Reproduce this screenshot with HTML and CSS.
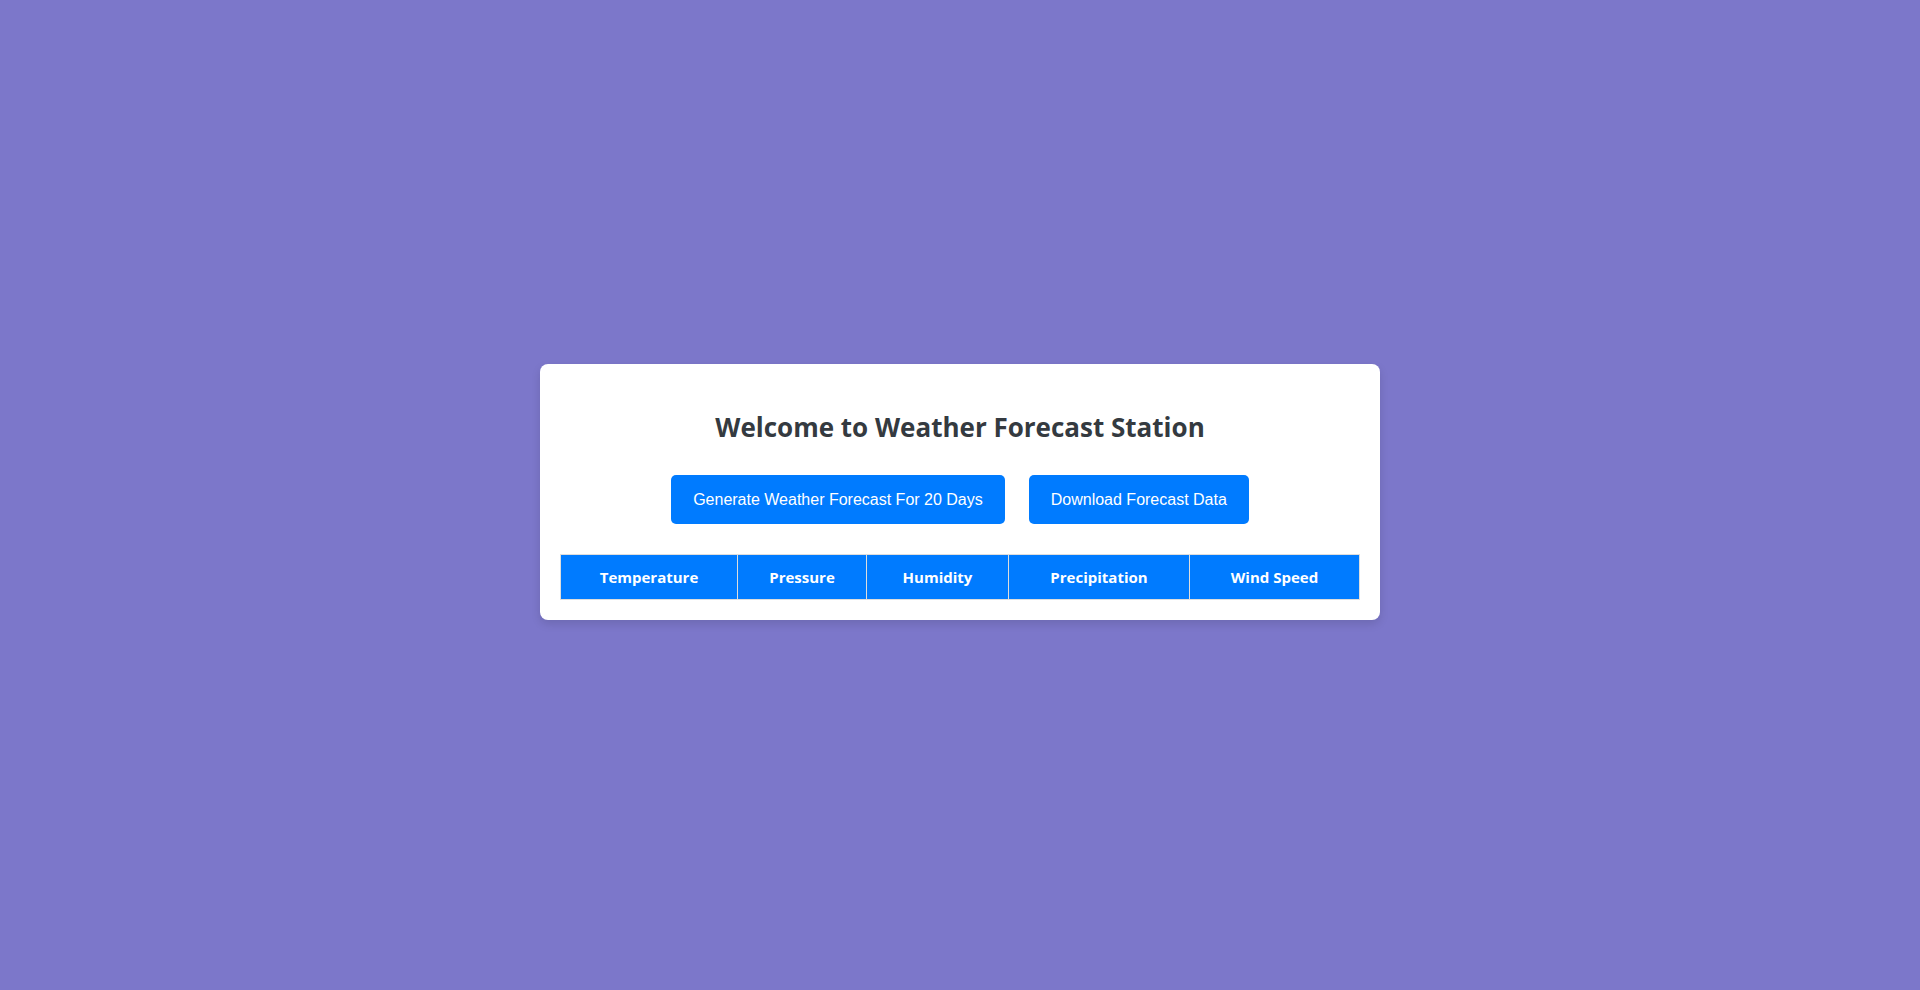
FILE: index.html
```html
<!DOCTYPE html>
<html lang="en">
<head>
<meta charset="utf-8">
<title>Weather Forecast Station</title>
<link rel="stylesheet" href="styles.css">
</head>
<body>
<main class="page">
  <section class="card">
    <h1 class="title">Welcome to Weather Forecast Station</h1>
    <div class="actions">
      <button class="btn" type="button">Generate Weather Forecast For 20 Days</button>
      <button class="btn" type="button">Download Forecast Data</button>
    </div>
    <table class="forecast">
      <thead>
        <tr>
          <th class="col-temp">Temperature</th>
          <th class="col-pres">Pressure</th>
          <th class="col-hum">Humidity</th>
          <th class="col-prec">Precipitation</th>
          <th class="col-wind">Wind Speed</th>
        </tr>
      </thead>
      <tbody></tbody>
    </table>
  </section>
</main>
</body>
</html>
```

FILE: styles.css
```css
html, body {
  margin: 0;
  padding: 0;
  height: 100%;
}

body {
  background: #7c77ca;
  font-family: "Open Sans", "Noto Sans", sans-serif;
  overflow: hidden;
}

.page {
  height: 984px;
  display: flex;
  align-items: center;
  justify-content: center;
}

.card {
  width: 800px;
  padding: 20px;
  background: #ffffff;
  border-radius: 8px;
  box-shadow: 0 4px 10px rgba(0, 0, 0, 0.12);
  text-align: center;
}

.title {
  margin: 24px 0 29px;
  font-size: 26px;
  line-height: 38px;
  font-weight: 700;
  color: #343a40;
}

.actions {
  display: flex;
  justify-content: center;
  gap: 24px;
  margin-bottom: 30px;
}

.btn {
  font-family: "Liberation Sans", Arial, sans-serif;
  font-size: 16px;
  line-height: 19px;
  color: #ffffff;
  background: #007bff;
  border: none;
  border-radius: 5px;
  padding: 15px 22px;
  cursor: pointer;
}

.forecast {
  width: 100%;
  border-collapse: collapse;
  table-layout: fixed;
}

.forecast th {
  background: #007bff;
  color: #ffffff;
  border: 1px solid #dddddd;
  font-size: 15px;
  font-weight: 700;
  height: 45px;
  padding: 0 8px;
  box-sizing: border-box;
}

.col-temp { width: 177px; }
.col-pres { width: 129px; }
.col-hum  { width: 142px; }
.col-prec { width: 181px; }
.col-wind { width: 170px; }
```
